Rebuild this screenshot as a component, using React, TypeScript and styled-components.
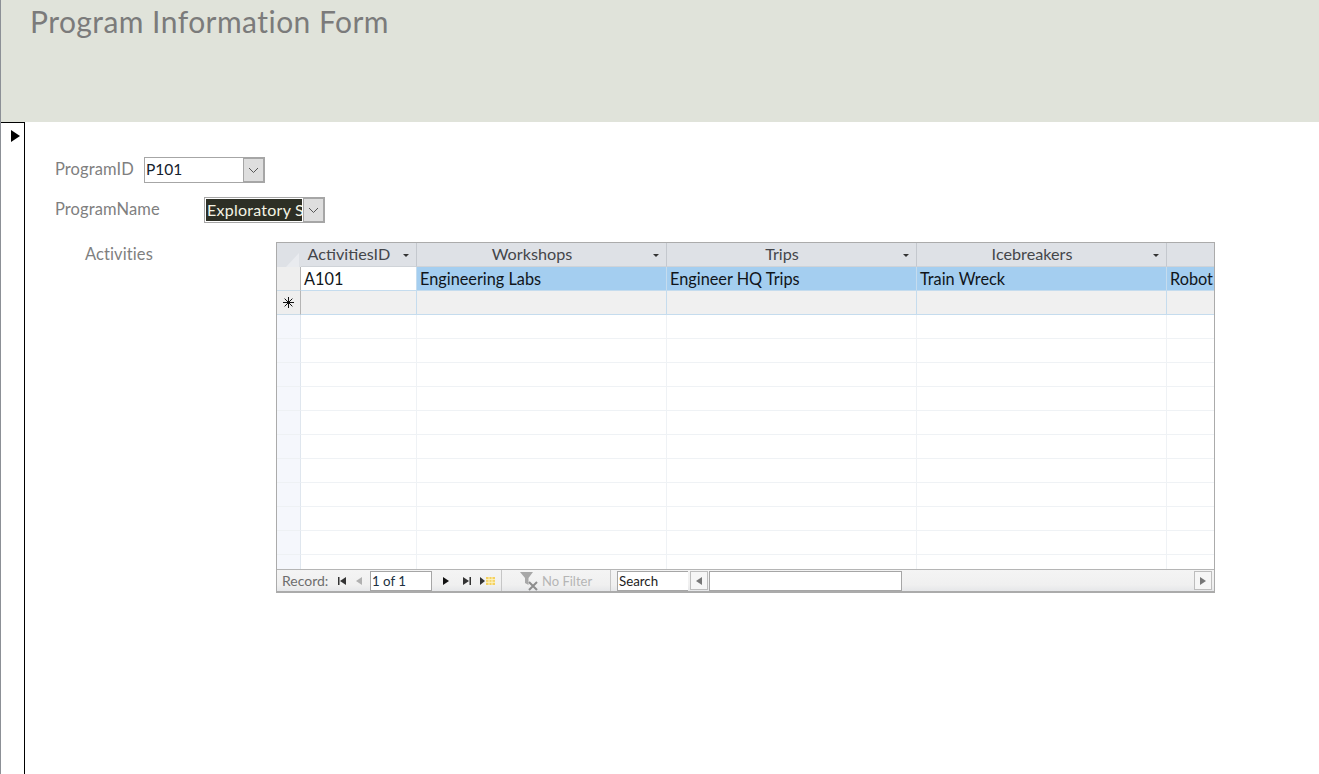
import React from 'react';
import styled, { createGlobalStyle } from 'styled-components';

const GlobalStyle = createGlobalStyle`
  html, body { margin: 0; padding: 0; background: #fff; overflow: hidden; }
  body { font-family: "Lato", "Open Sans", sans-serif; }
`;

const Page = styled.div`
  width: 1319px;
  height: 774px;
  box-sizing: border-box;
  border-left: 1px solid #8c9096;
  display: flex;
  flex-direction: column;
  overflow: hidden;
`;

const Header = styled.header`
  height: 122px;
  flex: none;
  background: #e0e3da;
  padding: 3px 0 0 29px;
  box-sizing: border-box;
`;

const Title = styled.h1`
  margin: 0;
  font-size: 30px;
  line-height: 36px;
  font-weight: 400;
  color: #7b7b7b;
  letter-spacing: 0.45px;
`;

const Body = styled.div`
  flex: 1;
  display: flex;
  min-height: 0;
`;

const RecordSelector = styled.div`
  width: 13px;
  flex: none;
  border-top: 1px solid #000;
  border-right: 1px solid #000;
  padding: 4px 0 0 10px;
`;

const Form = styled.main`
  flex: 1;
  padding-top: 35px;
  display: flex;
  flex-direction: column;
`;

const FieldRow = styled.div<{ $top: number }>`
  display: flex;
  align-items: center;
  height: 26px;
  margin: ${(p) => p.$top}px 0 0 30px;
`;

const Label = styled.label<{ $width: number }>`
  width: ${(p) => p.$width}px;
  font-size: 16.5px;
  letter-spacing: 0.1px;
  color: #7f7f7f;
  flex: none;
  position: relative;
  top: -1px;
`;

const Combo = styled.div`
  width: 121px;
  height: 26px;
  box-sizing: border-box;
  border: 1px solid #a6a6a6;
  background: #fff;
  display: flex;
`;

const ComboValue = styled.div<{ $selected?: boolean }>`
  flex: 1;
  min-width: 0;
  margin: 1px;
  padding-left: ${(p) => (p.$selected ? 1 : 0)}px;
  font-size: ${(p) => (p.$selected ? 16 : 15.5)}px;
  letter-spacing: ${(p) => (p.$selected ? 0.25 : 0)}px;
  line-height: 21px;
  white-space: nowrap;
  overflow: hidden;
  color: ${(p) => (p.$selected ? '#f4f4e4' : '#14202c')};
  background: ${(p) => (p.$selected ? '#2d2f25' : 'transparent')};
`;

const ComboButton = styled.div`
  width: 21px;
  flex: none;
  box-sizing: border-box;
  background: #dedede;
  border: 1px solid #a6a6a6;
  display: flex;
  align-items: center;
  justify-content: center;
`;

const SubformRow = styled.div`
  display: flex;
  margin: 19px 0 0 60px;
`;

const SubformLabel = styled(Label)`
  top: 2px;
`;

const Sheet = styled.div`
  width: 939px;
  height: 351px;
  box-sizing: border-box;
  border: 1px solid #ababab;
  border-bottom-width: 2px;
  display: flex;
  flex-direction: column;
  overflow: hidden;
`;

const Grid = styled.div`
  flex: 1;
  min-height: 0;
  overflow: hidden;
`;

const Row = styled.div`
  display: grid;
  grid-template-columns: 24px 116px 250px 250px 250px 48px;
  height: 24px;
`;

const HeadCell = styled.div`
  box-sizing: border-box;
  background: #dee1e6;
  border-right: 1px solid #c4c8ce;
  border-bottom: 1px solid #cfd3d8;
  font-size: 16.2px;
  line-height: 22px;
  color: #44464a;
  position: relative;
  text-align: center;
  padding-right: 19px;
  white-space: nowrap;

  &:last-child { border-right: 0; }
`;

const SortArrow = styled.span`
  position: absolute;
  right: 7px;
  top: 11px;
  width: 0;
  height: 0;
  border: 3px solid transparent;
  border-top: 3px solid #333;
  border-bottom: 0;
`;

const Corner = styled(HeadCell)`
  padding: 0 2px 0 0;
  border-right: 0;
  border-bottom: 0;
  display: flex;
  align-items: flex-end;
  justify-content: flex-end;
`;

const Selector = styled.div<{ $tone: 'grey' | 'pale' }>`
  box-sizing: border-box;
  background: ${(p) => (p.$tone === 'grey' ? '#eeeeee' : '#f5f7fc')};
  border-right: 1px solid ${(p) => (p.$tone === 'grey' ? '#b5b5b5' : '#dfe6ee')};
  border-bottom: 1px solid ${(p) => (p.$tone === 'grey' ? '#c9dbe8' : '#eef1f4')};
  display: flex;
  align-items: center;
  justify-content: center;
`;

const Cell = styled.div<{ $kind: 'current' | 'highlight' | 'new' | 'empty' }>`
  box-sizing: border-box;
  font-size: 16.3px;
  line-height: 24px;
  padding-left: 3px;
  color: #10151a;
  white-space: nowrap;
  overflow: hidden;
  background: ${(p) =>
    p.$kind === 'highlight' ? '#a4cef0' : p.$kind === 'new' ? '#f0f0f0' : '#fff'};
  border-right: 1px solid ${(p) => (p.$kind === 'empty' ? '#eff2f5' : '#c5dcee')};
  border-bottom: 1px solid ${(p) => (p.$kind === 'empty' ? '#eff2f5' : '#c5dcee')};

  &:last-child { border-right: 0; }
`;

const NavBar = styled.div`
  height: 22px;
  flex: none;
  box-sizing: border-box;
  border-top: 1px solid #b5b5b5;
  background: linear-gradient(#f4f4f4, #f0f0f0 70%, #e6e7e9);
  display: flex;
  align-items: center;
  font-size: 13.3px;
  color: #6d6d6d;
`;

const NavLabel = styled.span`
  margin-left: 5px;
  width: 54px;
  flex: none;
  font-size: 14px;
`;

const NavButton = styled.span<{ $width: number }>`
  width: ${(p) => p.$width}px;
  flex: none;
  display: flex;
  align-items: center;
  justify-content: center;
`;

const PageInput = styled.div`
  width: 62px;
  height: 20px;
  flex: none;
  box-sizing: border-box;
  border: 1px solid #a6a6a6;
  background: #fff;
  color: #20303e;
  padding-left: 1px;
  line-height: 18px;
`;

const FilterBox = styled.div`
  width: 110px;
  height: 21px;
  flex: none;
  box-sizing: border-box;
  border-left: 1px solid #c6c6c6;
  border-right: 1px solid #c6c6c6;
  display: flex;
  align-items: center;
  padding-left: 17px;
  gap: 2px;
  color: #b5b5b5;
  font-size: 13px;
`;

const SearchBox = styled.div`
  width: 71px;
  height: 20px;
  flex: none;
  box-sizing: border-box;
  margin-left: 6px;
  border: 1px solid #a6a6a6;
  border-right: 0;
  background: #fff;
  color: #222;
  padding-left: 1px;
  line-height: 18px;
`;

const ScrollArea = styled.div`
  flex: 1;
  display: flex;
  align-items: center;
  margin-left: 2px;
  padding-right: 2px;
  min-width: 0;
`;

const ScrollButton = styled.div`
  width: 18px;
  height: 19px;
  flex: none;
  box-sizing: border-box;
  border: 1px solid #bdbdbd;
  background: #f6f6f6;
  display: flex;
  align-items: center;
  justify-content: center;
`;

const ScrollThumb = styled.div`
  width: 193px;
  height: 20px;
  flex: none;
  margin-left: 1px;
  box-sizing: border-box;
  border: 1px solid #a6a6a6;
  background: #fff;
`;

const ScrollTrack = styled.div`
  flex: 1;
`;

const Chevron = () => (
  <svg width="11" height="7" viewBox="0 0 11 7">
    <path d="M1 1l4.5 4.5L10 1" fill="none" stroke="#555" strokeWidth="1" />
  </svg>
);

const Triangle = ({ dir = 'right', color = '#111', size = 8 }: { dir?: 'left' | 'right'; color?: string; size?: number }) => (
  <svg width={size / 2 + 2} height={size} viewBox="0 0 6 8">
    <path d={dir === 'right' ? 'M0 0l6 4-6 4z' : 'M6 0L0 4l6 4z'} fill={color} />
  </svg>
);

const FirstIcon = () => (
  <svg width="8" height="8" viewBox="0 0 8 8">
    <path d="M0 0h1.5v8H0zM8 0L2 4l6 4z" fill="#333" />
  </svg>
);

const LastIcon = () => (
  <svg width="8" height="8" viewBox="0 0 8 8">
    <path d="M0 0l6 4-6 4zM6.5 0H8v8H6.5z" fill="#333" />
  </svg>
);

const NewIcon = () => (
  <svg width="16" height="8" viewBox="0 0 16 8">
    <path d="M0 0l5 4-5 4z" fill="#333" />
    <rect x="6" y="0" width="9" height="8" fill="#f4d060" />
    <path d="M6 2.6h9M6 5.3h9M9 0v8M12 0v8" stroke="#fdf3c0" strokeWidth="1" />
  </svg>
);

const FilterIcon = () => (
  <svg width="21" height="20" viewBox="0 0 21 20">
    <path d="M1 1h13L9.5 7v7L6 12V7z" fill="#a8a8a8" />
    <path d="M10 11l8 8M18 11l-8 8" stroke="#8d8d8d" strokeWidth="2" />
  </svg>
);

const NewRowStar = () => (
  <svg width="11" height="11" viewBox="0 0 11 11">
    <path d="M5.5 0v11M0 5.5h11M1.6 1.6l7.8 7.8M9.4 1.6l-7.8 7.8" stroke="#111" strokeWidth="1" />
  </svg>
);

const CornerMark = () => (
  <svg width="13" height="15" viewBox="0 0 13 15">
    <path d="M0 15L13 1v14z" fill="#e9ebef" />
  </svg>
);

const columns = ['ActivitiesID', 'Workshops', 'Trips', 'Icebreakers', ''];
const record = ['A101', 'Engineering Labs', 'Engineer HQ Trips', 'Train Wreck', 'Robot'];
const emptyRows = Array.from({ length: 11 }, (_, i) => i);

export default function App() {
  return (
    <Page>
      <GlobalStyle />
      <Header>
        <Title>Program Information Form</Title>
      </Header>
      <Body>
        <RecordSelector>
          <Triangle size={14} color="#000" />
        </RecordSelector>
        <Form>
          <FieldRow $top={0}>
            <Label $width={89}>ProgramID</Label>
            <Combo>
              <ComboValue>P101</ComboValue>
              <ComboButton><Chevron /></ComboButton>
            </Combo>
          </FieldRow>
          <FieldRow $top={14}>
            <Label $width={149}>ProgramName</Label>
            <Combo>
              <ComboValue $selected>Exploratory S</ComboValue>
              <ComboButton><Chevron /></ComboButton>
            </Combo>
          </FieldRow>
          <SubformRow>
            <SubformLabel $width={191}>Activities</SubformLabel>
            <Sheet>
              <Grid>
                <Row>
                  <Corner><CornerMark /></Corner>
                  {columns.map((c, i) => (
                    <HeadCell key={i}>
                      {c}
                      {c && <SortArrow />}
                    </HeadCell>
                  ))}
                </Row>
                <Row>
                  <Selector $tone="grey" />
                  {record.map((v, i) => (
                    <Cell key={i} $kind={i === 0 ? 'current' : 'highlight'}>{v}</Cell>
                  ))}
                </Row>
                <Row>
                  <Selector $tone="grey"><NewRowStar /></Selector>
                  {record.map((_, i) => (
                    <Cell key={i} $kind="new" />
                  ))}
                </Row>
                {emptyRows.map((r) => (
                  <Row key={r}>
                    <Selector $tone="pale" />
                    {record.map((_, i) => (
                      <Cell key={i} $kind="empty" />
                    ))}
                  </Row>
                ))}
              </Grid>
              <NavBar>
                <NavLabel>Record:</NavLabel>
                <NavButton $width={12}><FirstIcon /></NavButton>
                <NavButton $width={22}><Triangle dir="left" color="#b0b0b0" /></NavButton>
                <PageInput>1 of 1</PageInput>
                <NavButton $width={27}><Triangle /></NavButton>
                <NavButton $width={15}><LastIcon /></NavButton>
                <NavButton $width={27}><NewIcon /></NavButton>
                <FilterBox>
                  <FilterIcon />
                  No Filter
                </FilterBox>
                <SearchBox>Search</SearchBox>
                <ScrollArea>
                  <ScrollButton><Triangle dir="left" color="#777" /></ScrollButton>
                  <ScrollThumb />
                  <ScrollTrack />
                  <ScrollButton><Triangle color="#777" /></ScrollButton>
                </ScrollArea>
              </NavBar>
            </Sheet>
          </SubformRow>
        </Form>
      </Body>
    </Page>
  );
}
